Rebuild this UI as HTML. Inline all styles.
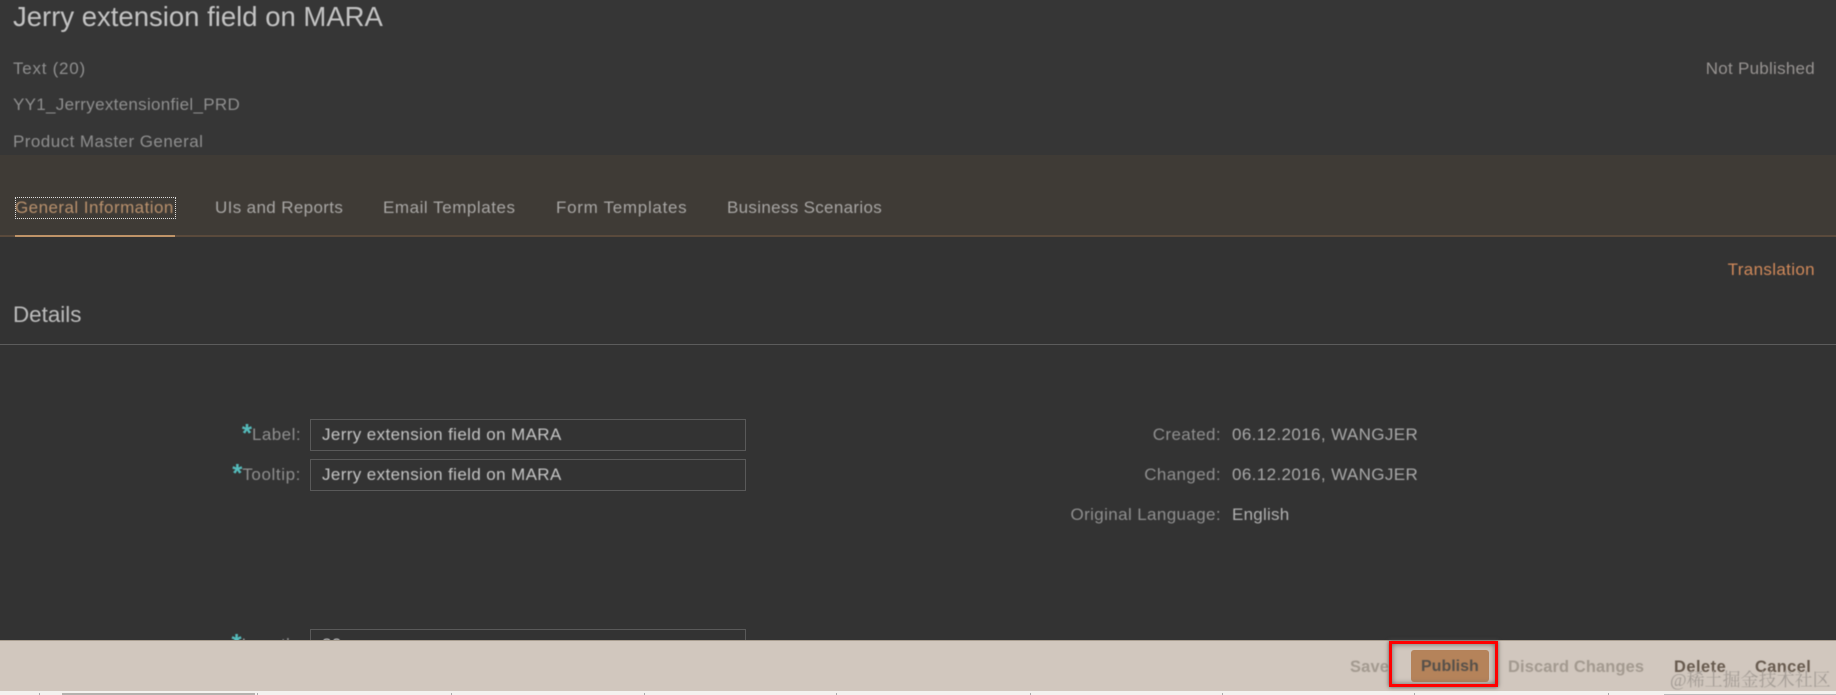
<!DOCTYPE html>
<html><head><meta charset="utf-8">
<style>
html,body{margin:0;padding:0;background:#333;}
#p{position:relative;width:1836px;height:695px;overflow:hidden;background:#333;font-family:"Liberation Sans",sans-serif;font-size:17px;letter-spacing:.38px;color:#a8a6a4;}
#p .t{position:absolute;white-space:nowrap;line-height:20px;filter:blur(.4px);}
#p .b{position:absolute;box-sizing:border-box;}
.r{text-align:right;}
.s{color:#55bcbc;font-size:26px;font-weight:bold;line-height:10px;letter-spacing:0;position:relative;top:2px;}
</style></head><body><div id="p">
<div class="b" style="left:0;top:0;width:1836px;height:155px;background:#363636"></div>
<div class="b" style="left:0;top:155px;width:1836px;height:81px;background:#3f3b36"></div>
<div class="b" style="left:0;top:235px;width:1836px;height:2px;background:#5a4a3c"></div>
<div class="b" style="left:15px;top:235px;width:160px;height:2px;background:#c09468"></div>

<div class="t" style="left:13px;top:2px;font-size:27.5px;line-height:30px;letter-spacing:0;color:#c4c4c4">Jerry extension field on MARA</div>
<div class="t" style="left:13px;top:59px;color:#8f8f8f;letter-spacing:.75px">Text (20)</div>
<div class="t" style="left:13px;top:95px;color:#8f8f8f;letter-spacing:.3px">YY1_Jerryextensionfiel_PRD</div>
<div class="t" style="left:13px;top:132px;color:#8f8f8f;letter-spacing:.45px">Product Master General</div>
<div class="t" style="right:21px;top:59px;color:#979391;letter-spacing:.26px">Not Published</div>

<div class="b" style="left:15px;top:197px;width:161px;height:22px;border:1px dotted #ddd"></div>
<div class="t" style="left:15px;top:198px;color:#b9916d;letter-spacing:.45px">General Information</div>
<div class="t" style="left:215px;top:198px;letter-spacing:.36px">UIs and Reports</div>
<div class="t" style="left:383px;top:198px;letter-spacing:.54px">Email Templates</div>
<div class="t" style="left:556px;top:198px;letter-spacing:.7px">Form Templates</div>
<div class="t" style="left:727px;top:198px;letter-spacing:.32px">Business Scenarios</div>

<div class="t" style="right:21px;top:260px;color:#d0895a;letter-spacing:.35px">Translation</div>
<div class="t" style="left:13px;top:304px;font-size:22.4px;line-height:22px;letter-spacing:0;color:#bdbdbd">Details</div>
<div class="b" style="left:0;top:344px;width:1836px;height:1px;background:#5c5c5c"></div>

<div class="t r" style="right:1535px;top:425px;color:#8f8f8f;letter-spacing:.45px"><span class="s">*</span>Label:</div>
<div class="b" style="left:310px;top:419px;width:436px;height:32px;border:1px solid #595959"></div>
<div class="t" style="left:322px;top:425px;color:#c4c4c4">Jerry extension field on MARA</div>
<div class="t r" style="right:1535px;top:465px;color:#8f8f8f;letter-spacing:.6px"><span class="s">*</span>Tooltip:</div>
<div class="b" style="left:310px;top:459px;width:436px;height:32px;border:1px solid #595959"></div>
<div class="t" style="left:322px;top:465px;color:#c4c4c4">Jerry extension field on MARA</div>
<div class="t r" style="right:1535px;top:635px;color:#8f8f8f"><span class="s">*</span>Length:</div>
<div class="b" style="left:310px;top:629px;width:436px;height:32px;border:1px solid #595959"></div>
<div class="t" style="left:322px;top:635px;color:#c4c4c4">20</div>

<div class="t r" style="right:615px;top:425px;color:#8f8f8f">Created:</div>
<div class="t" style="left:1232px;top:425px;color:#a8a8a8">06.12.2016, WANGJER</div>
<div class="t r" style="right:615px;top:465px;color:#8f8f8f">Changed:</div>
<div class="t" style="left:1232px;top:465px;color:#a8a8a8">06.12.2016, WANGJER</div>
<div class="t r" style="right:615px;top:505px;color:#8f8f8f">Original Language:</div>
<div class="t" style="left:1232px;top:505px;color:#b0b0b0;letter-spacing:.25px">English</div>

<div class="b" style="left:0;top:640px;width:1836px;height:51px;background:#d1c7be;border-top:1px solid #a89d90"></div>
<div class="b" style="left:0;top:691px;width:1836px;height:4px;background:#f4f2ef"></div>
<div class="b" style="left:62px;top:693px;width:193px;height:2px;background:#b5b2ae"></div>
<div class="b" style="left:39px;top:693px;width:1px;height:2px;background:#aaa"></div>
<div class="b" style="left:257px;top:693px;width:1px;height:2px;background:#aaa"></div>
<div class="b" style="left:451px;top:693px;width:1px;height:2px;background:#aaa"></div>
<div class="b" style="left:644px;top:693px;width:1px;height:2px;background:#aaa"></div>
<div class="b" style="left:836px;top:693px;width:1px;height:2px;background:#aaa"></div>
<div class="b" style="left:1030px;top:693px;width:1px;height:2px;background:#aaa"></div>
<div class="b" style="left:1222px;top:693px;width:1px;height:2px;background:#aaa"></div>
<div class="b" style="left:1414px;top:693px;width:1px;height:2px;background:#aaa"></div>
<div class="b" style="left:1608px;top:693px;width:1px;height:2px;background:#aaa"></div>
<div class="b" style="left:1664px;top:694px;width:172px;height:1px;background:#bbb"></div>

<div class="t" style="left:1350px;top:657px;font-size:16.4px;font-weight:bold;letter-spacing:.2px;color:#a39a90">Save</div>
<div class="b" style="left:1411px;top:650px;width:78px;height:32px;background:#b5835a;border-radius:3px"></div>
<div class="t" style="left:1421px;top:657px;font-size:16px;font-weight:bold;letter-spacing:0;color:#56504a">Publish</div>
<div class="b" style="left:1389px;top:641px;width:109px;height:46px;border:3px solid #f00;box-shadow:0 0 4px #555,inset 0 0 6px #666"></div>
<div class="t" style="left:1508px;top:657px;font-size:16.4px;font-weight:bold;letter-spacing:.15px;color:#a39a90">Discard Changes</div>
<div class="t" style="left:1674px;top:657px;font-size:16.4px;font-weight:bold;letter-spacing:.5px;color:#675a4e">Delete</div>
<div class="t" style="left:1755px;top:657px;font-size:16.4px;font-weight:bold;letter-spacing:.4px;color:#675a4e">Cancel</div>
<div class="t" style="left:1670px;top:670px;font-size:18px;letter-spacing:0;color:#a39c95;font-family:'Liberation Serif','Noto Serif CJK SC',serif">@稀土掘金技术社区</div>
</div></body></html>
